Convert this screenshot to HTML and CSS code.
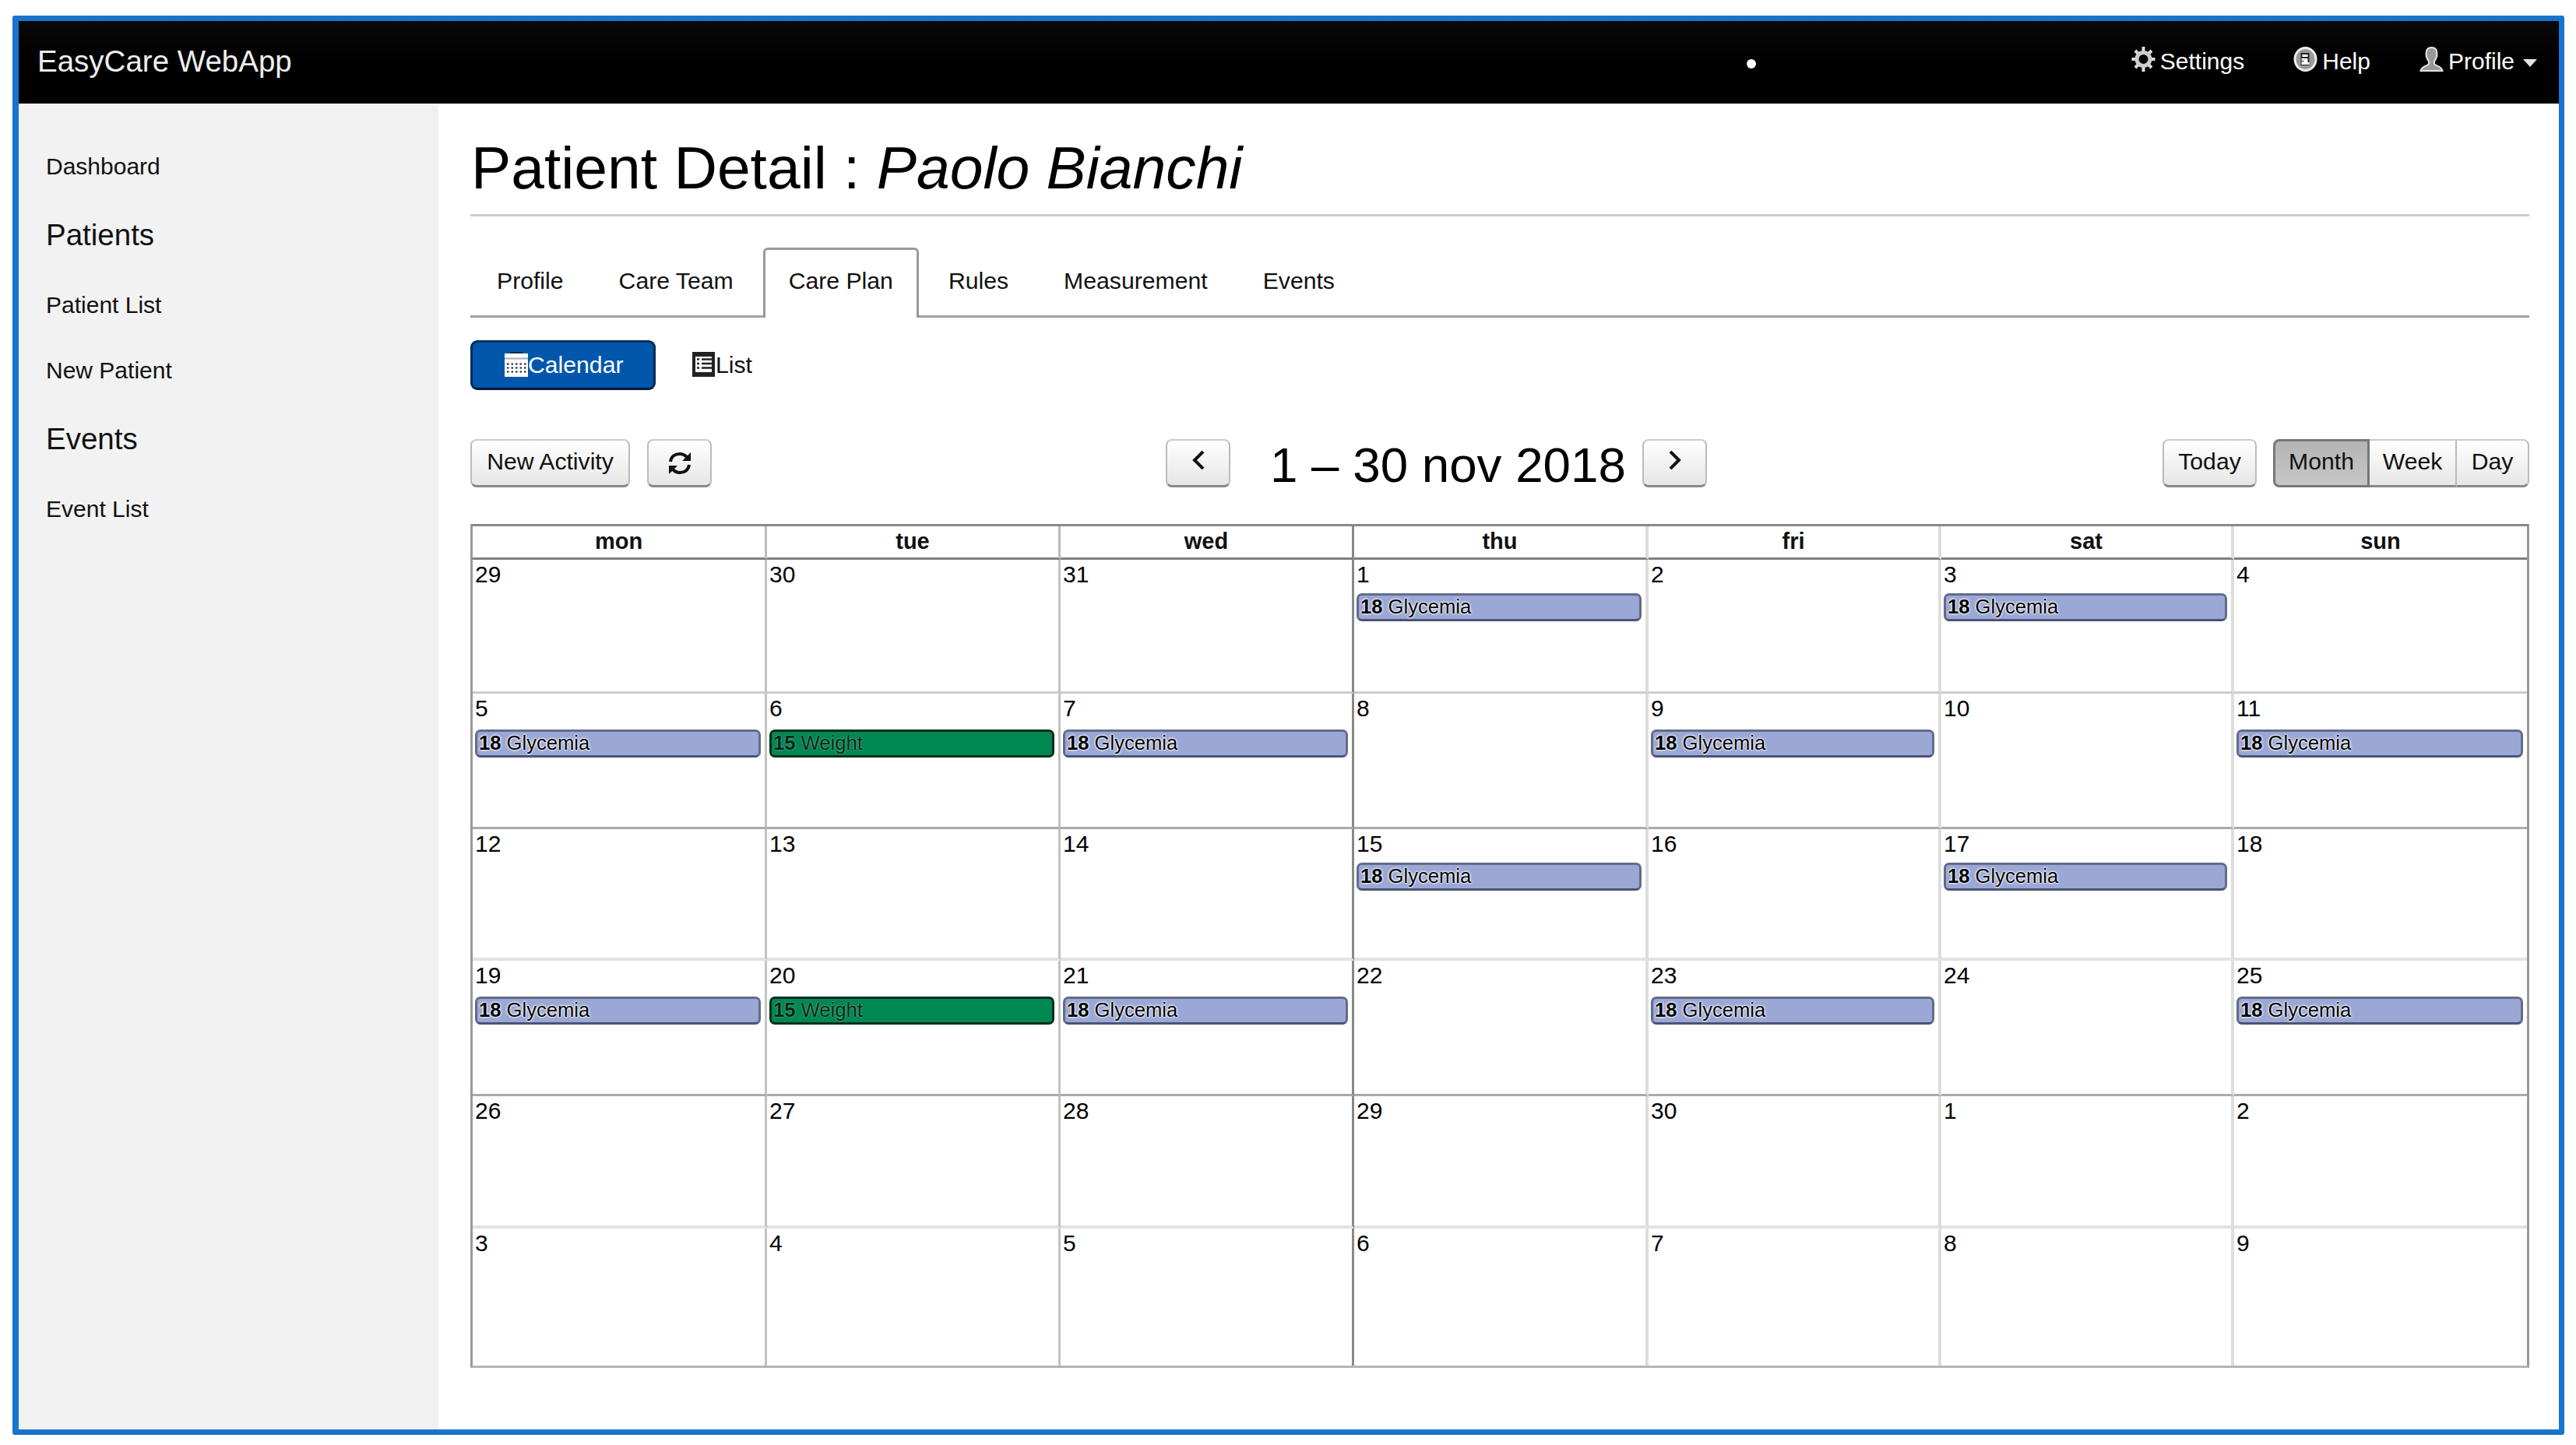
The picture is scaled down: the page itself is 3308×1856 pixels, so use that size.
FILE: index.html
```html
<!DOCTYPE html>
<html lang="en">
<head>
    <meta charset="UTF-8">
    <meta name="viewport" content="width=device-width, initial-scale=1.0">
    <title>EasyCare WebApp</title>
    <link rel="stylesheet" href="styles.css">
</head>
<body>
    <div class="app">
        <div class="navbar">
            <a class="brand" href="#">EasyCare WebApp</a>
            <span class="dot"></span>
            <div class="nav-links">
                <a class="nav-link" href="#">
                    <svg class="icon-nav" viewBox="0 0 30 32">
                        <path d="M15 0V32M0 16H30M4.500 5L25.500 27M25.500 5L4.500 27" stroke="#ddd" stroke-width="4"/>
                        <circle cx="15" cy="16" r="8.500" fill="#000" stroke="#ccc" stroke-width="5"/>
                    </svg>
                    <span>Settings</span>
                </a>
                <a class="nav-link" href="#">
                    <svg class="icon-nav" viewBox="0 0 30 32">
                        <ellipse cx="15" cy="16" rx="15" ry="16" fill="#eee"/>
                        <ellipse cx="15" cy="16" rx="12" ry="13" fill="#999"/>
                        <path d="M9 8H20V24H9Z" fill="#222"/>
                        <path d="M11 10H18V13H11ZM10 15H18V20H20V23H10V19H13V18H10Z" fill="#fff"/>
                    </svg>
                    <span>Help</span>
                </a>
                <a class="nav-link" href="#">
                    <svg class="icon-nav" viewBox="0 0 30 32">
                        <path d="M15 1C19.500 1 22 4 22 9C22 14 20 17 18.500 19V22C19 24.500 28 25 29 31H1C2 25 11 24.500 11.500 22V19C10 17 8 14 8 9C8 4 10.500 1 15 1Z" fill="#999" stroke="#e4e4e4" stroke-width="2"/>
                    </svg>
                    <span>Profile</span>
                    <span class="caret"></span>
                </a>
            </div>
        </div>

        <div class="body">
            <div class="sidebar">
                <a class="side-link" href="#">Dashboard</a>
                <h4>Patients</h4>
                <a class="side-link" href="#">Patient List</a>
                <a class="side-link" href="#">New Patient</a>
                <h4>Events</h4>
                <a class="side-link" href="#">Event List</a>
            </div>

            <div class="content">
                <h1>Patient Detail : <em>Paolo Bianchi</em></h1>

                <div class="tabs">
                    <a class="tab" href="#">Profile</a>
                    <a class="tab" href="#">Care Team</a>
                    <a class="tab active" href="#">Care Plan</a>
                    <a class="tab" href="#">Rules</a>
                    <a class="tab" href="#">Measurement</a>
                    <a class="tab" href="#">Events</a>
                </div>

                <div class="pills">
                    <a class="pill active" href="#">
                        <svg class="icon-pill" viewBox="0 0 30 32">
                            <path d="M0 2H7V0H23V2H30V32H0Z" fill="#fff"/>
                            <path d="M7 0H23V2H7Z" fill="#002a55"/>
                            <path d="M0 8.500H30" stroke="#aab" stroke-width="2"/>
                            <path d="M3 15.500H28M3 20.500H28M3 25.500H28" stroke="#123" stroke-width="2" stroke-dasharray="2.500 3"/>
                        </svg>
                        <span>Calendar</span>
                    </a>
                    <a class="pill" href="#">
                        <svg class="icon-pill" viewBox="0 0 30 32">
                            <path d="M0 0H29V32H0Z" fill="#222"/>
                            <path d="M4 6H25V26H4Z" fill="#fff"/>
                            <path d="M6 9.500H9M6 15H9M6 20.500H9M12 9.500H25M12 15H25M12 20.500H25" stroke="#222" stroke-width="2.500"/>
                        </svg>
                        <span>List</span>
                    </a>
                </div>

                <div class="toolbar">
                    <div class="tools-left">
                        <button class="btn btn-new">New Activity</button>
                        <button class="btn btn-icon">
                            <svg class="icon-refresh" viewBox="0 0 30 30">
                                <path d="M3 13C4 6 9 3 15 3C19 3 22 5 24 7M27 17C26 24 21 27 15 27C11 27 8 25 6 23" fill="none" stroke="#111" stroke-width="4"/>
                                <path d="M29 1V12H18ZM1 29V18H12Z" fill="#111"/>
                            </svg>
                        </button>
                    </div>
                    <div class="tools-center">
                        <button class="btn btn-arrow">
                            <svg class="icon-arrow" viewBox="0 0 18 24"><path d="M15 1L4 12L15 23" fill="none" stroke="#111" stroke-width="4"/></svg>
                        </button>
                        <h2>1 – 30 nov 2018</h2>
                        <button class="btn btn-arrow">
                            <svg class="icon-arrow" viewBox="0 0 18 24"><path d="M3 1L14 12L3 23" fill="none" stroke="#111" stroke-width="4"/></svg>
                        </button>
                    </div>
                    <div class="tools-right">
                        <button class="btn btn-today">Today</button>
                        <div class="btn-group">
                            <button class="btn btn-month active">Month</button>
                            <button class="btn btn-week">Week</button>
                            <button class="btn btn-day">Day</button>
                        </div>
                    </div>
                </div>

                <div class="calendar" id="calendar">
                    <!-- Days are filled in by the script -->
                </div>
            </div>
        </div>
    </div>

    <script>
        const names = ['mon', 'tue', 'wed', 'thu', 'fri', 'sat', 'sun'];
        const weeks = [
            [29, 30, 31, 1, 2, 3, 4],
            [5, 6, 7, 8, 9, 10, 11],
            [12, 13, 14, 15, 16, 17, 18],
            [19, 20, 21, 22, 23, 24, 25],
            [26, 27, 28, 29, 30, 1, 2],
            [3, 4, 5, 6, 7, 8, 9]
        ];
        // one letter per day: g = glycemia, w = weight
        const events = ['...g.g.', 'gwg.g.g', '...g.g.', 'gwg.g.g', '.......', '.......'];

        const eventHtml = {
            '.': '',
            g: '<div class="event glycemia"><b>18</b> Glycemia</div>',
            w: '<div class="event weight"><b>15</b> Weight</div>'
        };

        let html = names.map(name => `<div class="day-name">${name}</div>`).join('');
        weeks.forEach((week, row) => {
            week.forEach((day, col) => {
                html += `<div class="day week-${row + 1}"><div class="day-number">${day}</div>${eventHtml[events[row][col]]}</div>`;
            });
        });
        document.getElementById('calendar').innerHTML = html;
    </script>
</body>
</html>
```
FILE: styles.css
```css
* {
    margin: 0;
    padding: 0;
    box-sizing: border-box;
}

body {
    font-family: "Liberation Sans", Arial, sans-serif;
    font-size: 30.2px;
    color: #111;
    background: white;
    padding: 20px 15px 13px 16px;
    height: 1856px;
}

a {
    color: inherit;
    text-decoration: none;
}

.app {
    height: 1823px;
    border: 7px solid #1874cd;
    border-left-width: 8px;
    border-radius: 3px;
    display: flex;
    flex-direction: column;
}

/* Top bar */
.navbar {
    height: 106px;
    background: linear-gradient(#0a0a0a, #000 50%);
    color: #eee;
    display: flex;
    align-items: center;
    padding: 0 28px 3px 24px;
    flex-shrink: 0;
}

.brand {
    font-size: 38.5px;
    width: 2195px;
}

.dot {
    width: 12px;
    height: 12px;
    border-radius: 50%;
    background: white;
    margin-top: 7px;
}

.nav-links {
    display: flex;
    gap: 63px;
    margin-left: auto;
    color: white;
    font-size: 30px;
}

.nav-link {
    display: flex;
    align-items: center;
    gap: 6px;
}

.icon-nav {
    width: 31px;
    height: 32px;
    margin-top: -6px;
}

.caret {
    border: 9px solid transparent;
    border-top: 10px solid #e4e4e4;
    border-bottom: 0;
    margin: 4px 0 0 5px;
}

.body {
    flex: 1;
    display: flex;
}

/* Sidebar */
.sidebar {
    width: 539px;
    background: #f2f2f2;
    border-right: 8px solid #f0f0f0;
    padding: 63px 0 0 35px;
}

.side-link {
    display: block;
    font-size: 30px;
    line-height: 36px;
    margin-bottom: 48px;
}

.sidebar h4 {
    font-size: 38.5px;
    font-weight: normal;
    line-height: 44px;
    margin-bottom: 50px;
}

/* Main area */
.content {
    flex: 1;
    padding: 30px 38px 0 41px;
}

h1 {
    font-size: 76.8px;
    font-weight: normal;
    line-height: 105px;
    height: 115px;
    padding-left: 1px;
    border-bottom: 3px solid #ccc;
    color: black;
}

.tabs {
    display: flex;
    gap: 5px;
    height: 90px;
    margin-top: 40px;
    border-bottom: 3px solid #a0a0a0;
}

.tab {
    height: 90px;
    padding: 23px 30px 0;
    border: 3px solid transparent;
    border-bottom: 0;
    border-radius: 6px 6px 0 0;
}

.tab:first-child {
    padding-left: 31px;
}

.tab.active {
    background: white;
    border-color: #999;
}

.pills {
    display: flex;
    margin-top: 29px;
    gap: 3px;
}

.pill {
    display: flex;
    align-items: center;
    height: 64px;
    padding: 0 40px 1px 41px;
    border: 3px solid transparent;
    border-radius: 9px;
}

.pill.active {
    width: 238px;
    background: #0057ab;
    border-color: #012d5c;
    border-bottom-color: #001838;
    color: white;
}

.icon-pill {
    width: 30px;
    height: 32px;
    flex-shrink: 0;
    margin-top: -2px;
}

/* Calendar toolbar */
.toolbar {
    display: flex;
    justify-content: space-between;
    margin-top: 63px;
    height: 62px;
}

.tools-left,
.tools-center,
.tools-right {
    display: flex;
    gap: 22px;
}

.tools-left {
    width: 893px;
}

.tools-center {
    flex: 1;
    gap: 0;
}

.tools-right {
    gap: 21px;
}

h2 {
    font-size: 63.7px;
    font-weight: normal;
    line-height: 66px;
    width: 529px;
    padding-left: 51px;
    white-space: nowrap;
    color: black;
}

.btn {
    font: inherit;
    color: #111;
    height: 62px;
    padding: 0 17px 4px;
    border: 2px solid #bbb;
    border-top-color: #ccc;
    border-bottom: 3px solid #888;
    border-radius: 8px;
    background: linear-gradient(#fff, #e6e6e6);
    white-space: nowrap;
}

.btn-new {
    width: 205px;
}

.btn-icon {
    width: 83px;
}

.icon-refresh {
    width: 30px;
    height: 30px;
    vertical-align: middle;
}

.btn-arrow {
    width: 83px;
}

.icon-arrow {
    width: 18px;
    height: 24px;
}

.btn-today {
    width: 121px;
}

.btn-group {
    display: flex;
}

.btn-group .btn {
    border-radius: 0;
    border-left-width: 0;
    padding: 0 0 4px;
}

.btn-group .btn-month {
    width: 124px;
    border: 3px solid #777;
    border-radius: 8px 0 0 8px;
    background: linear-gradient(#b4b4b4, #c6c6c6);
}

.btn-group .btn-week {
    width: 112px;
}

.btn-group .btn-day {
    width: 93px;
    border-radius: 0 8px 8px 0;
}

/* Month grid */
.calendar {
    display: grid;
    grid-template-columns: 378px 377px 377px 378px 376px 376px 376px;
    grid-template-rows: 43px 172px 174px 169px 174px 170px 176px;
    margin-top: 47px;
    width: 2644px;
    border: 3px solid #999;
    border-top-color: #888;
    border-bottom-color: #b5b5b5;
}

.day-name {
    font-size: 29px;
    font-weight: bold;
    line-height: 38px;
    text-align: center;
    border-bottom: 3px solid #808080;
    border-right: 3px solid #bbb;
}

.day {
    border-right: 3px solid #c2c2c2;
    border-bottom: 3px solid #aaa;
    padding: 1px 5px 0 3px;
}

.day:nth-child(7n+3),
.day-name:nth-child(7n+3) {
    border-right-color: #888;
}

.day:nth-child(7n+4),
.day:nth-child(7n+5),
.day:nth-child(7n+6),
.day-name:nth-child(7n+4),
.day-name:nth-child(7n+5),
.day-name:nth-child(7n+6) {
    border-right: 4px solid #ddd;
}

.day:nth-child(7n),
.day-name:nth-child(7n) {
    border-right: 0;
}

.week-1 {
    border-bottom-color: #ccc;
}

.week-3,
.week-5 {
    border-bottom: 4px solid #e2e2e2;
}

.week-6 {
    border-bottom: 0;
}

.day-number {
    font-size: 30px;
    line-height: 36px;
    color: black;
}

.event {
    font-size: 25.6px;
    line-height: 29px;
    height: 36px;
    margin-top: 6px;
    padding-left: 2px;
    border: 3px solid #626c8a;
    border-bottom-color: #4a5474;
    border-radius: 7px;
    color: black;
    white-space: nowrap;
}

.week-2 .event,
.week-4 .event {
    margin-top: 9px;
}

.glycemia {
    background: #9ba8d6;
    text-shadow: 0 0 2px white, 0 0 3px white, 0 0 3px white;
}

.weight {
    background: #008752;
    border-color: #00301c;
    color: #03261a;
    text-shadow: 0 0 2px #9fd0b8;
}
```
